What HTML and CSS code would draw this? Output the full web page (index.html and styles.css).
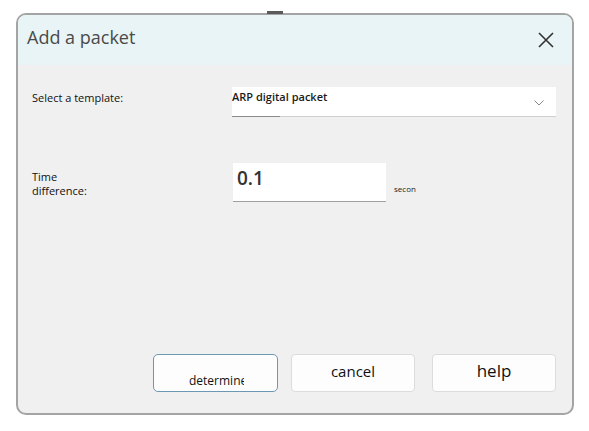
FILE: index.html
```html
<!DOCTYPE html>
<html>
<head>
<meta charset="utf-8">
<link rel="stylesheet" href="styles.css">
</head>
<body>
<div class="dialog">
  <div class="titlebar">
    <span class="title">Add a packet</span>
    <svg class="close" width="16" height="16" viewBox="0 0 16 16"><path d="M1 1 L15 15 M15 1 L1 15" stroke="#333" stroke-width="1.6" fill="none"/></svg>
  </div>
  <div class="content">
    <div class="row row-template">
      <div class="label">Select a template:</div>
      <div class="select">
        <span class="select-text">ARP digital packet</span>
        <svg class="chev" width="10" height="6" viewBox="0 0 10 6"><path d="M0.5 0.5 L5 5 L9.5 0.5" stroke="#888" stroke-width="1" fill="none"/></svg>
      </div>
    </div>
    <div class="row row-time">
      <div class="label label-time">Time<br>difference:</div>
      <div class="input">0.1</div>
      <div class="unit">secon</div>
    </div>
    <div class="buttons">
      <div class="btn btn-ok"><span class="clip">determine</span></div>
      <div class="btn btn-cancel">cancel</div>
      <div class="btn btn-help">help</div>
    </div>
  </div>
</div>
</body>
</html>
```
FILE: styles.css
```css
html, body {
  margin: 0;
  padding: 0;
  background: #ffffff;
  font-family: "Open Sans", "Noto Sans", sans-serif;
}
.dialog {
  position: relative;
  margin: 13px 0 0 16px;
  width: 554px;
  height: 398px;
  border: 2px solid #a4a4a4;
  border-radius: 10px;
  background: #f0f0f0;
  display: flex;
  flex-direction: column;
}
.dialog::before {
  content: "";
  position: absolute;
  top: -4px;
  left: 249px;
  width: 16px;
  height: 3px;
  background: #5a5a5a;
}
.titlebar {
  height: 50px;
  background: #e8f4f5;
  border-radius: 8px 8px 0 0;
  display: flex;
  align-items: center;
  justify-content: space-between;
  padding: 0 18px 0 9px;
}
.title {
  font-size: 18px;
  color: #4a4a4a;
  margin-top: -6px;
}
.close {
  display: block;
}
.content {
  flex: 1;
  display: flex;
  flex-direction: column;
  padding: 21px 15px 21px 14px;
}
.row {
  display: flex;
  align-items: flex-start;
}
.label {
  width: 200px;
  font-size: 11px;
  color: #111;
  line-height: 14px;
}
.row-template .label {
  padding-top: 5px;
}
.select {
  position: relative;
  width: 324px;
  height: 29px;
  margin-top: 1px;
  background: #ffffff;
  border-bottom: 1px solid #cfcfcf;
  display: flex;
  align-items: flex-start;
  justify-content: space-between;
}
.select::after {
  content: "";
  position: absolute;
  left: 0;
  bottom: -1px;
  width: 48px;
  height: 1px;
  background: #8a8a8a;
}
.select-text {
  font-size: 11px;
  font-weight: 600;
  color: #1a1a1a;
  line-height: 14px;
  padding-top: 3px;
}
.chev {
  margin: 13px 12px 0 0;
}
.row-time {
  margin-top: 46px;
}
.label-time {
  padding-top: 7px;
  line-height: 14px;
}
.input {
  width: 153px;
  height: 39px;
  margin-left: 1px;
  background: #ffffff;
  border-bottom: 1px solid #a0a0a0;
  font-size: 19px;
  font-weight: 600;
  color: #333;
  line-height: 22px;
  padding-left: 4px;
  padding-top: 4px;
  box-sizing: border-box;
}
.unit {
  font-size: 8px;
  color: #222;
  margin-left: 8px;
  padding-top: 20px;
}
.buttons {
  margin-top: auto;
  display: flex;
  justify-content: flex-end;
  gap: 13px;
  padding-right: 1px;
}
.btn {
  width: 124px;
  height: 38px;
  box-sizing: border-box;
  background: #fdfdfd;
  border: 1px solid #dcdcdc;
  border-radius: 4px;
  color: #111;
  display: flex;
  justify-content: center;
}
.btn-ok {
  width: 125px;
  border: 1px solid #6d98b3;
  border-radius: 5px;
  justify-content: flex-start;
  padding-left: 35px;
}
.clip {
  display: block;
  flex: none;
  width: 55px;
  overflow: hidden;
  white-space: nowrap;
  font-size: 12px;
  line-height: 15px;
  padding-top: 18px;
}
.btn-cancel {
  font-size: 15px;
  line-height: 20px;
  padding-top: 6px;
}
.btn-help {
  margin-left: 4px;
  font-size: 17px;
  line-height: 22px;
  padding-top: 5px;
}
```
